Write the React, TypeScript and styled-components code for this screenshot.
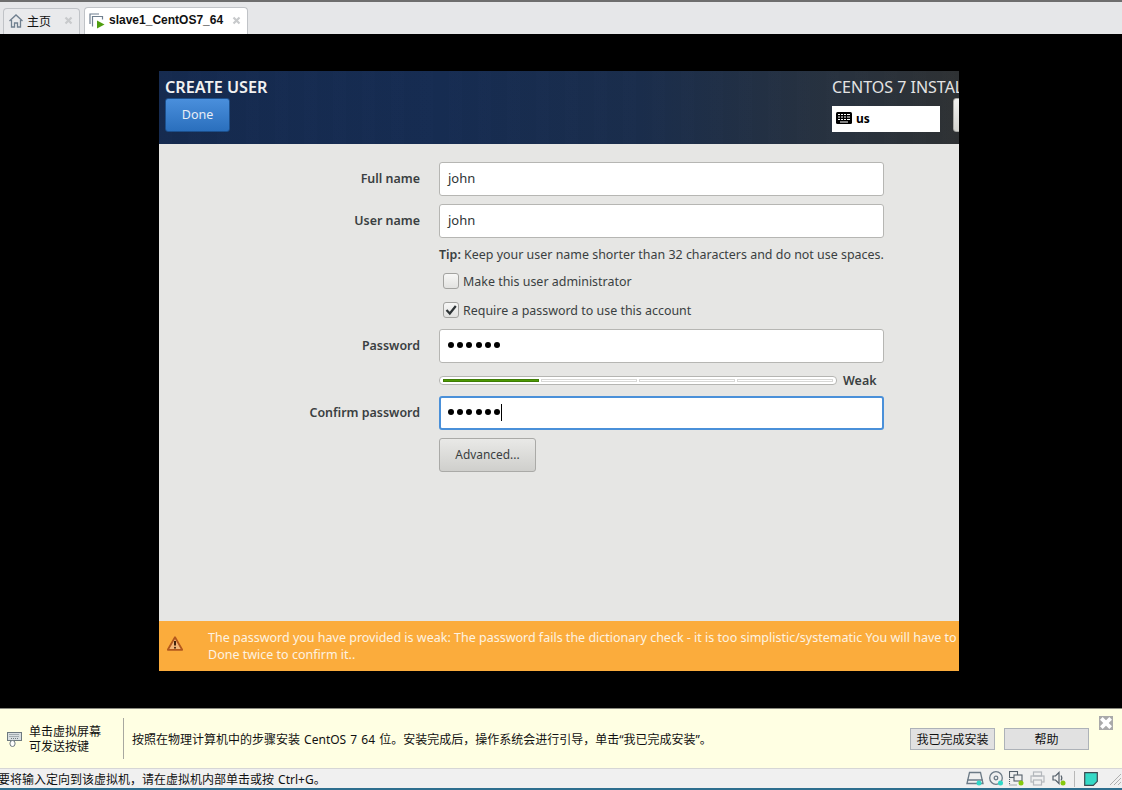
import styled, { createGlobalStyle } from "styled-components";

const GlobalStyle = createGlobalStyle`
  html, body { margin: 0; padding: 0; background: #000; }
  * { box-sizing: border-box; }
`;

const Page = styled.div`
  display: flex;
  flex-direction: column;
  width: 1122px;
  height: 790px;
  overflow: hidden;
  font-family: "Liberation Sans", "Noto Sans CJK SC", sans-serif;
`;

const TabBar = styled.div`
  display: flex;
  align-items: flex-end;
  gap: 4px;
  height: 34px;
  padding-left: 3px;
  background: #e6e7e9;
  border-top: 2px solid #6e6e6e;
`;

const Tab = styled.div<{ $active?: boolean }>`
  display: flex;
  align-items: center;
  width: ${(p) => (p.$active ? "164px" : "77px")};
  height: ${(p) => (p.$active ? "27px" : "26px")};
  padding: 0 0 2px 4px;
  background: ${(p) => (p.$active ? "#fff" : "#e9eaec")};
  border: 1px solid #c0c3c7;
  border-bottom: none;
  border-radius: 4px 4px 0 0;
  font-size: 12px;
  font-weight: ${(p) => (p.$active ? 700 : 400)};
  color: #111;
  white-space: nowrap;
`;

const TabLabel = styled.span`
  margin-left: 3px;
  flex: 1;
`;

const TabClose = styled.svg`
  flex: none;
  width: 9px;
  height: 9px;
  margin-right: 6px;
  stroke: #c8cacc;
  stroke-width: 2.2;
`;

const Screen = styled.div`
  flex: 1;
  background: #000;
  padding: 37px 0 0 159px;
`;

const Installer = styled.div`
  display: flex;
  flex-direction: column;
  width: 800px;
  height: 600px;
  overflow: hidden;
  background: #e6e6e4;
  font-family: "Noto Sans", "Open Sans", sans-serif;
  color: #2e3436;
`;

const Header = styled.div`
  display: flex;
  height: 73px;
  flex: none;
  background:
    repeating-linear-gradient(90deg, rgba(255,255,255,0.004) 0 13px, rgba(0,0,0,0.008) 13px 29px),
    linear-gradient(90deg, #152a4f 0%, #162c52 35%, #1a2d4c 60%, #28323f 85%, #2e3133 100%);
`;

const HeaderLeft = styled.div`
  flex: none;
  width: 673px;
  padding: 6px 0 0 6px;
`;

const HeaderTitle = styled.div`
  color: #f1f1f1;
  font-size: 16.2px;
  font-weight: 600;
  line-height: 21px;
`;

const DoneButton = styled.button`
  display: block;
  width: 65px;
  height: 34px;
  margin-top: 0;
  padding: 0 0 2px;
  border: 1px solid #1c4f8c;
  border-radius: 3px;
  background: linear-gradient(#4a8fdc, #2a6fbd);
  color: #e8eef6;
  font: 400 12.5px "Noto Sans", sans-serif;
`;

const HeaderRight = styled.div`
  flex: none;
  width: 200px;
  padding-top: 6px;
`;

const ProductTitle = styled.div`
  color: #e4e4e4;
  font-size: 16px;
  line-height: 21px;
  white-space: nowrap;
`;

const HeaderControls = styled.div`
  display: flex;
  align-items: flex-end;
  gap: 13px;
  height: 34px;
`;

const KeyboardBox = styled.div`
  display: flex;
  align-items: center;
  gap: 4px;
  width: 108px;
  height: 26px;
  padding: 0 0 2px 4px;
  background: #fff;
  color: #000;
  font-size: 12px;
  font-weight: 700;
`;

const HelpButton = styled.div`
  width: 40px;
  height: 34px;
  border: 1px solid #a8a8a4;
  border-radius: 3px;
  background: linear-gradient(#f2f2f0, #d4d4d0);
`;

const Form = styled.div`
  flex: 1;
  display: grid;
  grid-template-columns: 261px 445px;
  column-gap: 19px;
  align-content: start;
  padding-top: 18px;
  font-size: 12.45px;
`;

const FieldLabel = styled.div<{ $gap?: number }>`
  display: flex;
  align-items: center;
  justify-content: flex-end;
  height: 34px;
  padding-bottom: 2px;
  font-weight: 600;
  color: #3a3f41;
  margin-top: ${(p) => p.$gap ?? 0}px;
`;

const Field = styled.div<{ $focus?: boolean; $gap?: number }>`
  display: flex;
  align-items: center;
  height: 34px;
  padding: 0 0 2px 8px;
  margin-top: ${(p) => p.$gap ?? 0}px;
  background: #fff;
  border: ${(p) => (p.$focus ? "2px solid #4a90d9" : "1px solid #b6b6b3")};
  border-radius: 3px;
  color: #2e3436;
  font-size: 13px;
`;

const Dots = styled.span<{ $focus?: boolean }>`
  display: flex;
  gap: 3.2px;
  margin-left: ${(p) => (p.$focus ? "-1px" : "0")};
`;

const Dot = styled.span`
  width: 6px;
  height: 6px;
  border-radius: 50%;
  background: #000;
`;

const Caret = styled.span`
  width: 1px;
  height: 17px;
  margin-left: 1px;
  background: #000;
`;

const Empty = styled.div``;

const Tip = styled.div`
  margin-top: 8px;
  line-height: 17px;
  white-space: nowrap;
  color: #3a3f41;
  b { font-weight: 600; }
`;

const CheckRow = styled.label<{ $gap: number }>`
  display: flex;
  align-items: center;
  gap: 4px;
  margin: ${(p) => p.$gap}px 0 0 4px;
  height: 18px;
  color: #3a3f41;
`;

const CheckBox = styled.span`
  display: flex;
  align-items: center;
  justify-content: center;
  width: 16px;
  height: 16px;
  border: 1px solid #a3a3a0;
  border-radius: 3px;
  background: linear-gradient(#f7f7f6, #e2e2e0);
`;

const StrengthRow = styled.div`
  display: flex;
  align-items: center;
  gap: 6px;
  height: 10px;
  margin-top: 12px;
  font-weight: 600;
  color: #3a3f41;
`;

const StrengthBar = styled.div`
  display: flex;
  gap: 2px;
  width: 398px;
  height: 9px;
  padding: 2px 3px;
  background: #fff;
  border: 1px solid #b5b5b2;
  border-radius: 4px;
`;

const StrengthCell = styled.div<{ $on?: boolean }>`
  flex: 1;
  background: ${(p) => (p.$on ? "#4e9a06" : "#fff")};
  border: 1px solid ${(p) => (p.$on ? "#3f7d05" : "#d8d8d6")};
`;

const AdvancedButton = styled.button`
  display: block;
  width: 97px;
  height: 34px;
  margin-top: 8px;
  padding: 0 0 2px;
  border: 1px solid #aaaaa7;
  border-radius: 3px;
  background: linear-gradient(#e9e9e7, #cfcfcc);
  color: #3a3f41;
  font: 400 11.9px "Noto Sans", sans-serif;
`;

const WarningBar = styled.div`
  display: flex;
  height: 50px;
  flex: none;
  padding: 8px 0 0 8px;
  background: #fbac3c;
  color: #fdf3e2;
  font-size: 12.5px;
  line-height: 17px;
  white-space: nowrap;
`;

const WarningIcon = styled.div`
  flex: none;
  width: 41px;
  padding-top: 7px;
`;

const Banner = styled.div`
  display: flex;
  align-items: center;
  flex: none;
  height: 60px;
  background: #ffffe3;
  border-top: 1px solid #8a8a80;
  color: #111;
  font-family: "Noto Sans", "Noto Sans CJK SC", sans-serif;
  font-size: 12px;
`;

const BannerHint = styled.div`
  display: flex;
  align-items: center;
  gap: 7px;
  width: 124px;
  height: 41px;
  padding-left: 7px;
  border-right: 1px solid #a8a8a0;
  line-height: 15px;
`;

const BannerText = styled.div`
  margin-left: 8px;
  width: 778px;
  white-space: nowrap;
  word-spacing: 1px;
`;

const BannerButton = styled.button<{ $gap: number }>`
  flex: none;
  width: 85px;
  height: 22px;
  margin-left: ${(p) => p.$gap}px;
  padding: 0;
  background: #e1e1e1;
  border: 1px solid #adb2b8;
  color: #111;
  font: 400 12px "Noto Sans CJK SC", sans-serif;
`;

const BannerClose = styled.svg`
  position: absolute;
  right: 9px;
  top: 716px;
  width: 14px;
  height: 14px;
  background: #a9a9a9;
  stroke: #fff;
  stroke-width: 2.4;
`;

const StatusBar = styled.div`
  display: flex;
  align-items: center;
  flex: none;
  height: 22px;
  background: #f0f0f0;
  border-top: 1px solid #d6d6d6;
  border-bottom: 2px solid #2e6e8e;
  font-family: "Noto Sans", "Noto Sans CJK SC", sans-serif;
  font-size: 12px;
  color: #111;
`;

const StatusText = styled.div`
  flex: 1;
  margin-left: -2px;
  white-space: nowrap;
  word-spacing: 1px;
`;

const StatusIcons = styled.div`
  display: flex;
  align-items: center;
  gap: 5px;
  padding-right: 1px;
`;

const StatusDivider = styled.span`
  width: 1px;
  height: 16px;
  margin: 0 4px 0 3px;
  background: #b8b8b8;
`;

const HomeIcon = () => (
  <svg width="16" height="16" viewBox="0 0 16 16" fill="none" stroke="#6f7f8f" strokeWidth="1.3">
    <path d="M1.5 8 8 2l6.5 6M3.5 7v7h3v-4h3v4h3V7" />
  </svg>
);

const VmIcon = () => (
  <svg width="17" height="17" viewBox="0 0 17 17" fill="none">
    <path d="M1 12V2h9M3.5 14.5v-10h10v3" stroke="#6f7f8f" strokeWidth="1.2" />
    <path d="M8 8.5 15.5 12.5 8 16.5z" fill="#4f9e0f" />
  </svg>
);

const KeyboardIcon = () => (
  <svg width="16" height="12" viewBox="0 0 16 12">
    <rect width="16" height="12" rx="1.5" fill="#000" />
    <path d="M2 2.5h2M5 2.5h2M8 2.5h2M11 2.5h3M2 5h2M5 5h2M8 5h2M11 5h3M2 7.5h2M5 7.5h2M8 7.5h2M11 7.5h3M4 10h8" stroke="#fff" strokeWidth="1" />
  </svg>
);

const CheckIcon = () => (
  <svg width="12" height="12" viewBox="0 0 12 12" fill="none">
    <path d="M1.5 6 4.8 9.5 10.8 2" stroke="#2e3436" strokeWidth="2.2" />
  </svg>
);

const TriangleIcon = () => (
  <svg width="16" height="15" viewBox="0 0 16 15">
    <path d="M8 1.2 15.2 13.8H.8z" fill="#f3b578" stroke="#b3581c" strokeWidth="1.8" strokeLinejoin="round" />
    <path d="M8 5v4.5" stroke="#40220f" strokeWidth="2" />
    <circle cx="8" cy="11.7" r="1" fill="#40220f" />
  </svg>
);

const HintIcon = () => (
  <svg width="15" height="16" viewBox="0 0 15 16" fill="none" stroke="#6e7a80">
    <rect x="0.5" y="1.5" width="14" height="8" fill="#d8dee0" />
    <path d="M2.5 3.5h10M2.5 5.5h10M4 7.5h7" strokeDasharray="1 1" />
    <rect x="3" y="9.5" width="5" height="6" rx="2.5" fill="#fff" />
  </svg>
);

const DiskIcon = () => (
  <svg width="18" height="15" viewBox="0 0 18 15" fill="none" stroke="#6c7a86" strokeWidth="1.3">
    <path d="M1 12.5 3.5 1.5h11L17 12.5zM1 9h16" />
    <circle cx="13" cy="12" r="2.5" fill="#2fd8c8" stroke="none" />
  </svg>
);

const CdIcon = () => (
  <svg width="15" height="15" viewBox="0 0 15 15" fill="none" stroke="#6c7a86" strokeWidth="1.3">
    <circle cx="7" cy="7" r="6.3" />
    <circle cx="7" cy="7" r="1.8" />
    <circle cx="11.5" cy="12" r="2.5" fill="#2fd8c8" stroke="none" />
  </svg>
);

const NetIcon = () => (
  <svg width="16" height="15" viewBox="0 0 16 15" fill="none" stroke="#55606a" strokeWidth="1.1">
    <rect x="0.5" y="0.5" width="8" height="6" />
    <rect x="5" y="4" width="8" height="6" fill="#f0f0f0" />
    <path d="M0.5 8v6h8" strokeDasharray="1 1" />
    <circle cx="12" cy="12" r="2.5" fill="#86c80c" stroke="none" />
  </svg>
);

const PrinterIcon = () => (
  <svg width="15" height="15" viewBox="0 0 15 15" fill="none" stroke="#b4b8bc" strokeWidth="1.2">
    <rect x="3.5" y="1" width="8" height="4" />
    <rect x="1" y="5" width="13" height="6" />
    <rect x="3.5" y="9" width="8" height="5" fill="#f0f0f0" />
  </svg>
);

const SoundIcon = () => (
  <svg width="16" height="15" viewBox="-3 0 16 15" fill="none" stroke="#55606a" strokeWidth="1.2">
    <path d="M0 5h2.5L6 1.5v11L2.5 9H0z" />
    <path d="M8 4.5c1 1.5 1 3.5 0 5" />
    <circle cx="10" cy="12" r="2.5" fill="#86c80c" stroke="none" />
  </svg>
);

const NoteIcon = () => (
  <svg width="14" height="14" viewBox="0 0 14 14">
    <path d="M.7.7h12.6v8.6l-4 4H.7z" fill="#35d9c6" stroke="#3c4a50" strokeWidth="1.2" />
  </svg>
);

const Grip = () => (
  <svg width="18" height="12" viewBox="-6 0 18 12" stroke="#b0b0b0">
    <path d="M1 12 12 1M5 12l7-7M9 12l3-3" />
  </svg>
);

const CloseGlyph = () => <path d="M1.5 1.5l6 6M7.5 1.5l-6 6" fill="none" />;

const PasswordDots = ({ focus }: { focus?: boolean }) => (
  <Dots $focus={focus}>
    {[0, 1, 2, 3, 4, 5].map((i) => (
      <Dot key={i} />
    ))}
  </Dots>
);

export default function App() {
  return (
    <Page>
      <GlobalStyle />
      <TabBar>
        <Tab>
          <HomeIcon />
          <TabLabel>主页</TabLabel>
          <TabClose viewBox="0 0 9 9">
            <CloseGlyph />
          </TabClose>
        </Tab>
        <Tab $active>
          <VmIcon />
          <TabLabel>slave1_CentOS7_64</TabLabel>
          <TabClose viewBox="0 0 9 9">
            <CloseGlyph />
          </TabClose>
        </Tab>
      </TabBar>

      <Screen>
        <Installer>
          <Header>
            <HeaderLeft>
              <HeaderTitle>CREATE USER</HeaderTitle>
              <DoneButton>Done</DoneButton>
            </HeaderLeft>
            <HeaderRight>
              <ProductTitle>CENTOS 7 INSTALLATION</ProductTitle>
              <HeaderControls>
                <KeyboardBox>
                  <KeyboardIcon />
                  us
                </KeyboardBox>
                <HelpButton />
              </HeaderControls>
            </HeaderRight>
          </Header>

          <Form>
            <FieldLabel>Full name</FieldLabel>
            <Field>john</Field>

            <FieldLabel $gap={8}>User name</FieldLabel>
            <Field $gap={8}>john</Field>

            <Empty />
            <div>
              <Tip>
                <b>Tip:</b> Keep your user name shorter than 32 characters and do not use spaces.
              </Tip>
              <CheckRow $gap={9}>
                <CheckBox />
                Make this user administrator
              </CheckRow>
              <CheckRow $gap={11}>
                <CheckBox>
                  <CheckIcon />
                </CheckBox>
                Require a password to use this account
              </CheckRow>
            </div>

            <FieldLabel $gap={10}>Password</FieldLabel>
            <Field $gap={10}>
              <PasswordDots />
            </Field>

            <Empty />
            <StrengthRow>
              <StrengthBar>
                <StrengthCell $on />
                <StrengthCell />
                <StrengthCell />
                <StrengthCell />
              </StrengthBar>
              Weak
            </StrengthRow>

            <FieldLabel $gap={11}>Confirm password</FieldLabel>
            <Field $focus $gap={11}>
              <PasswordDots focus />
              <Caret />
            </Field>

            <Empty />
            <AdvancedButton>Advanced...</AdvancedButton>
          </Form>

          <WarningBar>
            <WarningIcon>
              <TriangleIcon />
            </WarningIcon>
            <div>
              The password you have provided is weak: The password fails the dictionary check - it is too simplistic/systematic You will have to press
              <br />
              Done twice to confirm it..
            </div>
          </WarningBar>
        </Installer>
      </Screen>

      <Banner>
        <BannerHint>
          <HintIcon />
          <div>
            单击虚拟屏幕
            <br />
            可发送按键
          </div>
        </BannerHint>
        <BannerText>按照在物理计算机中的步骤安装 CentOS 7 64 位。安装完成后，操作系统会进行引导，单击“我已完成安装”。</BannerText>
        <BannerButton $gap={0}>我已完成安装</BannerButton>
        <BannerButton $gap={9}>帮助</BannerButton>
        <BannerClose viewBox="0 0 9 9">
          <CloseGlyph />
        </BannerClose>
      </Banner>

      <StatusBar>
        <StatusText>要将输入定向到该虚拟机，请在虚拟机内部单击或按 Ctrl+G。</StatusText>
        <StatusIcons>
          <DiskIcon />
          <CdIcon />
          <NetIcon />
          <PrinterIcon />
          <SoundIcon />
          <StatusDivider />
          <NoteIcon />
          <Grip />
        </StatusIcons>
      </StatusBar>
    </Page>
  );
}
